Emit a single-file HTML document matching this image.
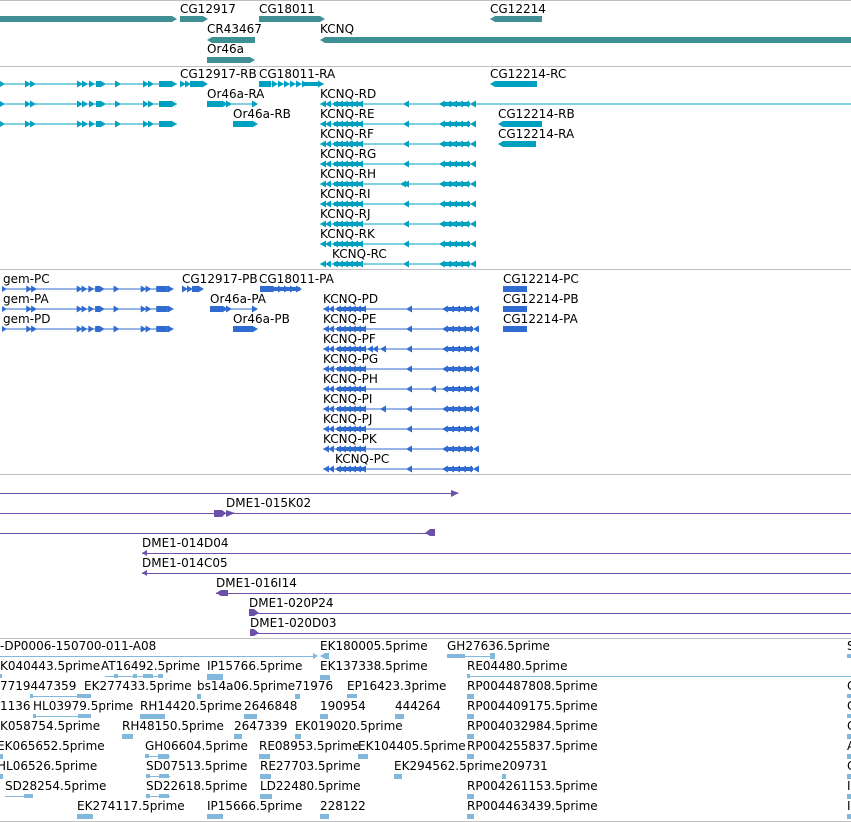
<!DOCTYPE html>
<html><head><meta charset="utf-8"><style>
html,body{margin:0;padding:0;background:#fff;width:851px;height:822px;overflow:hidden}
svg{display:block}
text{font-family:"DejaVu Sans","Liberation Sans",sans-serif;font-size:12px;fill:#000}
</style></head><body>
<svg width="851" height="822" viewBox="0 0 851 822" xmlns="http://www.w3.org/2000/svg">
<defs>
<polygon id="ra" points="0,-3.5 6,0 0,3.5" fill="currentColor"/>
<polygon id="la" points="6,-3.5 0,0 6,3.5" fill="currentColor"/>
<g id="gemS">
<line x1="0" y1="0" x2="177" y2="0" stroke="currentColor" stroke-width="1"/>
<polygon points="0,-3 5,0 0,3" fill="currentColor"/>
<use href="#ra" x="25"/><use href="#ra" x="30"/>
<use href="#ra" x="77"/><use href="#ra" x="82"/><use href="#ra" x="89"/><rect x="96" y="-3" width="5" height="6" fill="currentColor"/><use href="#ra" x="100"/>
<use href="#ra" x="115"/>
<use href="#ra" x="143"/><use href="#ra" x="148"/>
<rect x="159" y="-3" width="12" height="6" fill="currentColor"/><use href="#ra" x="171"/>
</g>
<g id="kcnq">
<line x1="0" y1="0" x2="155" y2="0" stroke="currentColor"/>
<use href="#la" x="0"/><use href="#la" x="5"/>
<use href="#la" x="12"/><use href="#la" x="17"/><use href="#la" x="22"/><use href="#la" x="27"/><use href="#la" x="32"/><use href="#la" x="37"/>
<rect x="14" y="-2" width="28" height="4" fill="currentColor"/>
<use href="#la" x="83"/>
<use href="#la" x="119"/><use href="#la" x="125"/><use href="#la" x="131"/><use href="#la" x="137"/><use href="#la" x="143"/><use href="#la" x="150"/>
<rect x="122" y="-2" width="28" height="4" fill="currentColor"/>
</g>
</defs>
<g fill="#c0c0c0">
<rect x="0" y="0" width="851" height="1"/>
<rect x="0" y="66" width="851" height="1"/>
<rect x="0" y="269" width="851" height="1"/>
<rect x="0" y="474" width="851" height="1"/>
<rect x="0" y="638" width="851" height="1"/>
<rect x="0" y="821" width="851" height="1"/>
</g>

<g fill="#3f8f94">
<polygon points="0,16 172,16 177,19 172,22 0,22"/>
<polygon points="180,16 203,16 208,19 203,22 180,22"/>
<polygon points="259,16 320,16 325,19 320,22 259,22"/>
<polygon points="495,16 542,16 542,22 495,22 490,19"/>
<polygon points="212,37 255,37 255,43 212,43 207,40"/>
<polygon points="325,37 851,37 851,43 325,43 320,40"/>
<polygon points="207,57 250,57 255,60 250,63 207,63"/>
</g>
<text x="180" y="13">CG12917</text><text x="259" y="13">CG18011</text><text x="490" y="13">CG12214</text>
<text x="207" y="33">CR43467</text><text x="320" y="33">KCNQ</text>
<text x="207" y="53">Or46a</text>

<g style="color:#00a0c0" fill="#00a0c0">
<use href="#gemS" y="84"/><use href="#gemS" y="104"/><use href="#gemS" y="124"/>
<use href="#ra" x="180" y="84"/><use href="#ra" x="185" y="84"/><rect x="190" y="81" width="13" height="6"/><use href="#ra" x="202" y="84"/>
<line x1="259" y1="84" x2="324" y2="84" stroke="#00a0c0"/><rect x="259" y="81" width="12" height="6"/>
<use href="#ra" x="272" y="84"/><use href="#ra" x="278" y="84"/><use href="#ra" x="284" y="84"/><use href="#ra" x="290" y="84"/><use href="#ra" x="296" y="84"/><use href="#ra" x="302" y="84"/><rect x="303" y="82" width="15" height="4"/><use href="#ra" x="318" y="84"/>
<polygon points="495,81 537,81 537,87 495,87 490,84"/>
<rect x="207" y="101" width="16" height="6"/><use href="#ra" x="222" y="104"/><use href="#ra" x="226" y="104"/><line x1="226" y1="104" x2="257" y2="104" stroke="#00a0c0"/><use href="#ra" x="252" y="104"/>
<rect x="233" y="121" width="20" height="6"/><use href="#ra" x="252" y="124"/>
<use href="#kcnq" x="320" y="104"/><line x1="470" y1="104" x2="851" y2="104" stroke="#00a0c0"/>
<use href="#kcnq" x="320" y="124"/><use href="#kcnq" x="320" y="144"/><use href="#kcnq" x="320" y="164"/><use href="#kcnq" x="320" y="184"/><use href="#kcnq" x="320" y="204"/><use href="#kcnq" x="320" y="224"/><use href="#kcnq" x="320" y="244"/>
<use href="#la" x="400" y="184"/><use href="#la" x="346" y="144"/>
<use href="#kcnq" x="320" y="264"/>
<polygon points="503,121 542,121 542,127 503,127 498,124"/>
<polygon points="503,141 536,141 536,147 503,147 498,144"/>
</g>
<text x="180" y="78">CG12917-RB</text><text x="259" y="78">CG18011-RA</text><text x="490" y="78">CG12214-RC</text>
<text x="207" y="98">Or46a-RA</text><text x="320" y="98">KCNQ-RD</text>
<text x="233" y="118">Or46a-RB</text><text x="320" y="118">KCNQ-RE</text><text x="498" y="118">CG12214-RB</text>
<text x="320" y="138">KCNQ-RF</text><text x="498" y="138">CG12214-RA</text>
<text x="320" y="158">KCNQ-RG</text><text x="320" y="178">KCNQ-RH</text><text x="320" y="198">KCNQ-RI</text>
<text x="320" y="218">KCNQ-RJ</text><text x="320" y="238">KCNQ-RK</text><text x="332" y="258">KCNQ-RC</text>

<g style="color:#2f6bd0" fill="#2f6bd0">
<use href="#gemS" y="289" transform="translate(2 0) scale(0.97 1)"/>
<use href="#gemS" y="309" transform="translate(2 0) scale(0.97 1)"/>
<use href="#gemS" y="329" transform="translate(2 0) scale(0.97 1)"/>
<use href="#ra" x="182" y="289"/><use href="#ra" x="187" y="289"/><rect x="192" y="286" width="7" height="6"/><use href="#ra" x="198" y="289"/>
<rect x="260" y="286" width="12" height="6"/><use href="#ra" x="272" y="289"/><use href="#ra" x="278" y="289"/><use href="#ra" x="284" y="289"/><use href="#ra" x="290" y="289"/><use href="#ra" x="296" y="289"/><rect x="275" y="287" width="25" height="4"/>
<rect x="503" y="286" width="24" height="6"/><rect x="503" y="306" width="24" height="6"/><rect x="503" y="326" width="24" height="6"/>
<rect x="210" y="306" width="13" height="6"/><use href="#ra" x="222" y="309"/><use href="#ra" x="226" y="309"/><line x1="226" y1="309" x2="257" y2="309" stroke="#2f6bd0"/><use href="#ra" x="252" y="309"/>
<rect x="233" y="326" width="20" height="6"/><use href="#ra" x="252" y="329"/>
<use href="#kcnq" x="323" y="309"/><use href="#kcnq" x="323" y="329"/><use href="#kcnq" x="323" y="349"/><use href="#kcnq" x="323" y="369"/><use href="#kcnq" x="323" y="389"/><use href="#kcnq" x="323" y="409"/><use href="#kcnq" x="323" y="429"/><use href="#kcnq" x="323" y="449"/>
<use href="#la" x="367" y="349"/><use href="#la" x="372" y="349"/><use href="#la" x="380" y="349"/><use href="#la" x="430" y="389"/><use href="#la" x="380" y="409"/>
<use href="#kcnq" x="323" y="469"/>
</g>
<text x="3" y="283">gem-PC</text><text x="182" y="283">CG12917-PB</text><text x="259" y="283">CG18011-PA</text><text x="503" y="283">CG12214-PC</text>
<text x="3" y="303">gem-PA</text><text x="210" y="303">Or46a-PA</text><text x="323" y="303">KCNQ-PD</text><text x="503" y="303">CG12214-PB</text>
<text x="3" y="323">gem-PD</text><text x="233" y="323">Or46a-PB</text><text x="323" y="323">KCNQ-PE</text><text x="503" y="323">CG12214-PA</text>
<text x="323" y="343">KCNQ-PF</text><text x="323" y="363">KCNQ-PG</text><text x="323" y="383">KCNQ-PH</text><text x="323" y="403">KCNQ-PI</text>
<text x="323" y="423">KCNQ-PJ</text><text x="323" y="443">KCNQ-PK</text><text x="335" y="463">KCNQ-PC</text>

<g fill="#6a50a8" stroke="none">
<rect x="0" y="493" width="452" height="1"/><polygon points="451,490 459,493 451,497"/>
<rect x="0" y="513" width="851" height="1"/><polygon points="214,510 222,510 226,513 222,517 214,517"/><polygon points="226,510 235,513 226,517"/>
<rect x="0" y="533" width="435" height="1"/><polygon points="430,529 435,529 435,536 430,536 425,533"/>
<rect x="142" y="553" width="709" height="1"/><polygon points="142,553 147,550 147,556"/>
<rect x="142" y="573" width="709" height="1"/><polygon points="142,573 147,570 147,576"/>
<rect x="216" y="593" width="635" height="1"/><polygon points="221,590 228,590 228,596 221,596 216,593"/>
<rect x="249" y="613" width="602" height="1"/><polygon points="249,609 254,609 259,613 254,616 249,616"/>
<rect x="250" y="633" width="601" height="1"/><polygon points="250,629 254,629 259,633 254,636 250,636"/>
</g>
<text x="226" y="507">DME1-015K02</text>
<text x="142" y="547">DME1-014D04</text><text x="142" y="567">DME1-014C05</text>
<text x="216" y="587">DME1-016I14</text><text x="249" y="607">DME1-020P24</text><text x="250" y="627">DME1-020D03</text>

<g fill="#82b8dc">
<rect x="0" y="656" width="313" height="1"/><polygon points="313,653 318,656 313,659"/>
<polygon points="325,653 329,653 329,659 325,659 320,656"/>
<rect x="447" y="654" width="18" height="4"/><rect x="465" y="656" width="30" height="1"/><rect x="490" y="653" width="5" height="6"/>
<rect x="847" y="654" width="4" height="4"/>
<rect x="320" y="675" width="10" height="5"/><rect x="467" y="676" width="384" height="1"/><rect x="467" y="674" width="3" height="4"/>
<rect x="0" y="674" width="2" height="4"/>
<rect x="105" y="676" width="58" height="1"/><rect x="114" y="674" width="4" height="4"/><rect x="133" y="674" width="4" height="4"/><rect x="143" y="674" width="10" height="4"/><rect x="158" y="674" width="5" height="4"/>
<rect x="207" y="674" width="16" height="6"/>
<rect x="30" y="696" width="60" height="1"/><rect x="30" y="694" width="3" height="4"/><rect x="77" y="694" width="14" height="4"/>
<rect x="197" y="694" width="4" height="5"/><rect x="295" y="694" width="5" height="5"/><rect x="347" y="694" width="10" height="4"/>
<rect x="467" y="694" width="7" height="5"/><rect x="847" y="694" width="4" height="4"/>
<rect x="33" y="716" width="58" height="1"/><rect x="33" y="714" width="3" height="4"/><rect x="78" y="714" width="13" height="4"/>
<rect x="140" y="714" width="25" height="5"/><rect x="244" y="714" width="13" height="5"/><rect x="320" y="714" width="8" height="5"/><rect x="395" y="714" width="9" height="5"/><rect x="467" y="714" width="7" height="5"/><rect x="847" y="714" width="4" height="4"/>
<rect x="122" y="734" width="11" height="5"/><rect x="234" y="734" width="8" height="5"/><rect x="295" y="734" width="6" height="5"/><rect x="467" y="734" width="7" height="5"/><rect x="847" y="734" width="4" height="5"/>
<rect x="0" y="754" width="3" height="5"/><rect x="145" y="756" width="25" height="1"/><rect x="145" y="754" width="4" height="4"/><rect x="158" y="754" width="11" height="5"/><rect x="259" y="754" width="11" height="5"/><rect x="358" y="754" width="10" height="5"/><rect x="467" y="754" width="7" height="5"/><rect x="847" y="754" width="4" height="5"/>
<rect x="0" y="774" width="3" height="5"/><rect x="146" y="776" width="24" height="1"/><rect x="146" y="774" width="4" height="4"/><rect x="159" y="774" width="10" height="4"/><rect x="260" y="774" width="11" height="5"/><rect x="394" y="774" width="8" height="5"/><rect x="502" y="774" width="4" height="5"/><rect x="847" y="774" width="4" height="5"/>
<rect x="5" y="796" width="28" height="1"/><rect x="24" y="794" width="9" height="4"/><rect x="146" y="796" width="24" height="1"/><rect x="146" y="794" width="4" height="4"/><rect x="159" y="794" width="10" height="4"/><rect x="260" y="794" width="12" height="5"/><rect x="467" y="794" width="7" height="5"/><rect x="847" y="794" width="4" height="5"/>
<rect x="77" y="814" width="16" height="5"/><rect x="207" y="814" width="16" height="5"/><rect x="320" y="814" width="9" height="5"/><rect x="467" y="814" width="7" height="5"/><rect x="847" y="814" width="4" height="5"/>
</g>
<text x="0" y="650">-DP0006-150700-011-A08</text><text x="320" y="650">EK180005.5prime</text><text x="447" y="650">GH27636.5prime</text><text x="847" y="650">S</text>
<text x="0" y="670">K040443.5prime</text><text x="101" y="670">AT16492.5prime</text><text x="207" y="670">IP15766.5prime</text><text x="320" y="670">EK137338.5prime</text><text x="467" y="670">RE04480.5prime</text>
<text x="0" y="690">7719447359</text><text x="84" y="690">EK277433.5prime</text><text x="197" y="690">bs14a06.5prime</text><text x="295" y="690">71976</text><text x="347" y="690">EP16423.3prime</text><text x="467" y="690">RP004487808.5prime</text><text x="847" y="690">C</text>
<text x="0" y="710">1136</text><text x="33" y="710">HL03979.5prime</text><text x="140" y="710">RH14420.5prime</text><text x="244" y="710">2646848</text><text x="320" y="710">190954</text><text x="395" y="710">444264</text><text x="467" y="710">RP004409175.5prime</text><text x="847" y="710">C</text>
<text x="0" y="730">K058754.5prime</text><text x="122" y="730">RH48150.5prime</text><text x="234" y="730">2647339</text><text x="295" y="730">EK019020.5prime</text><text x="467" y="730">RP004032984.5prime</text><text x="847" y="730">C</text>
<text x="-3" y="750">EK065652.5prime</text><text x="145" y="750">GH06604.5prime</text><text x="259" y="750">RE08953.5prime</text><text x="358" y="750">EK104405.5prime</text><text x="467" y="750">RP004255837.5prime</text><text x="847" y="750">A</text>
<text x="-3" y="770">HL06526.5prime</text><text x="146" y="770">SD07513.5prime</text><text x="260" y="770">RE27703.5prime</text><text x="394" y="770">EK294562.5prime</text><text x="502" y="770">209731</text><text x="847" y="770">C</text>
<text x="5" y="790">SD28254.5prime</text><text x="146" y="790">SD22618.5prime</text><text x="260" y="790">LD22480.5prime</text><text x="467" y="790">RP004261153.5prime</text><text x="847" y="790">I</text>
<text x="77" y="810">EK274117.5prime</text><text x="207" y="810">IP15666.5prime</text><text x="320" y="810">228122</text><text x="467" y="810">RP004463439.5prime</text><text x="847" y="810">I</text>
</svg>
</body></html>
